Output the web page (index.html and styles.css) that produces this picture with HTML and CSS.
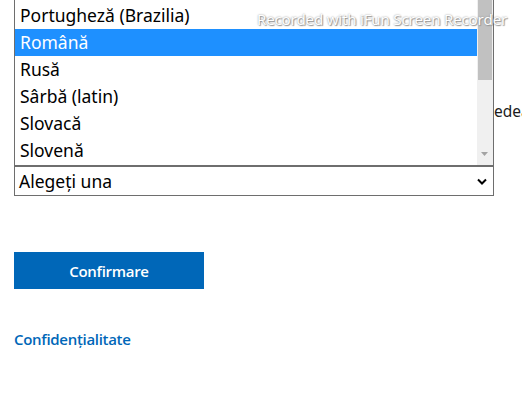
FILE: index.html
```html
<!DOCTYPE html>
<html lang="ro">
<head>
<meta charset="utf-8">
<link rel="stylesheet" href="styles.css">
</head>
<body>
<main class="page">
  <p class="intro">edea</p>
  <div class="field">
    <div class="select">
      <span>Alegeți una</span>
      <svg class="chev" width="10" height="7" viewBox="0 0 10 7"><path d="M1 1.5 L5 5.5 L9 1.5" fill="none" stroke="#000" stroke-width="2"/></svg>
    </div>
    <div class="listbox">
      <ul class="options">
        <li>Polonă</li>
        <li>Portugheză (Brazilia)</li>
        <li class="sel">Română</li>
        <li>Rusă</li>
        <li>Sârbă (latin)</li>
        <li>Slovacă</li>
        <li>Slovenă</li>
      </ul>
      <div class="scrollbar">
        <div class="thumb"></div>
        <svg class="down" width="7" height="4" viewBox="0 0 7 4"><path d="M0 0 H7 L3.5 4 Z" fill="#a3a3a3"/></svg>
      </div>
    </div>
  </div>
  <button class="btn">Confirmare</button>
  <a class="link" href="#">Confidențialitate</a>
</main>
<div class="watermark">Recorded with iFun Screen Recorder</div>
</body>
</html>
```
FILE: styles.css
```css
html, body { margin: 0; padding: 0; overflow: hidden; background: #fff; }
body { font-family: "Noto Sans", "Open Sans", sans-serif; color: #1b1b1b; width: 522px; height: 402px; position: relative; }
.page { padding: 0 14px; display: flex; flex-direction: column; align-items: flex-start; }
.intro { margin: 101px 0 0 480px; font-size: 15.5px; line-height: 20px; white-space: nowrap; }
.field { position: relative; margin-top: 45px; width: 480px; }
.select { box-sizing: border-box; height: 30px; border: 1px solid #6e6e6e; display: flex; align-items: center; justify-content: space-between; padding: 0 5px 0 4px; font-size: 17.5px; color: #000; }
.chev { margin-right: 1px; }
.listbox { position: absolute; left: 0; bottom: 100%; box-sizing: border-box; width: 480px; height: 191px; border: 1px solid #6e6e6e; border-top: none; background: #fff; display: flex; }
.options { list-style: none; margin: 0; padding: 0; flex: 1; }
.options li { height: 27px; line-height: 27px; padding-left: 5px; font-size: 17.5px; color: #000; white-space: nowrap; }
.options li.sel { background: #1e90ff; color: #fff; }
.scrollbar { width: 16px; background: #f0f0f0; position: relative; }
.thumb { position: absolute; left: 1px; right: 1px; top: 0; height: 105px; background: #c1c1c1; }
.down { position: absolute; left: 4px; bottom: 9px; }
.btn { margin-top: 56px; width: 190px; height: 37px; border: none; background: #0067b8; color: #fff; font-family: "Open Sans", "Noto Sans", sans-serif; font-weight: 600; font-size: 15px; padding: 0; letter-spacing: -0.3px; }
.link { margin-top: 40px; color: #0067b8; text-decoration: none; font-family: "Open Sans", "Noto Sans", sans-serif; font-size: 15px; line-height: 20px; font-weight: 600; letter-spacing: -0.3px; }
.watermark { position: absolute; left: 257px; top: 9px; font-family: "Open Sans", sans-serif; font-size: 15.2px; color: #fff; text-shadow: 0 0 2px #8a8a8a, 1px 1px 1px #9a9a9a; letter-spacing: -0.2px; }
```
